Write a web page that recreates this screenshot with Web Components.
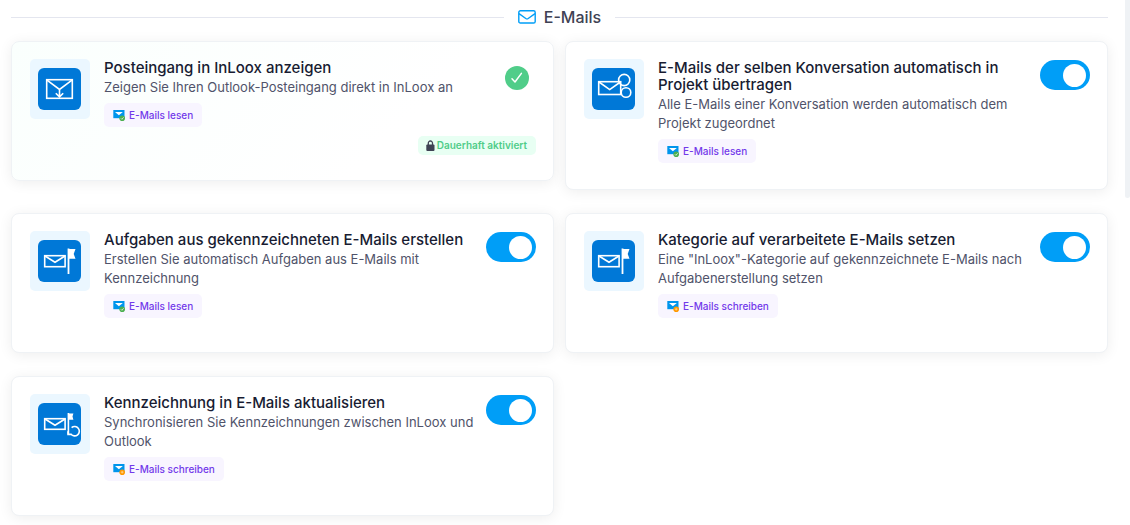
<!DOCTYPE html>
<html lang="de">
<head>
<meta charset="utf-8">
<title>E-Mails</title>
<style>
body { margin: 0; background: #fff; font-family: Inter, "Open Sans", sans-serif; color: #181c32; }
</style>
</head>
<body>
<settings-page>
  <section-heading>E-Mails</section-heading>
  <card-grid>
    <feature-card icon="inbox" scope="read" locked>
      <span slot="title">Posteingang in InLoox anzeigen</span>
      <span slot="text">Zeigen Sie Ihren Outlook-Posteingang direkt in InLoox an</span>
    </feature-card>
    <feature-card icon="conversation" scope="read">
      <span slot="title">E-Mails der selben Konversation automatisch in Projekt übertragen</span>
      <span slot="text">Alle E-Mails einer Konversation werden automatisch dem Projekt zugeordnet</span>
    </feature-card>
    <feature-card icon="flag" scope="read">
      <span slot="title">Aufgaben aus gekennzeichneten E-Mails erstellen</span>
      <span slot="text">Erstellen Sie automatisch Aufgaben aus E-Mails mit Kennzeichnung</span>
    </feature-card>
    <feature-card icon="flag" scope="write">
      <span slot="title">Kategorie auf verarbeitete E-Mails setzen</span>
      <span slot="text">Eine "InLoox"-Kategorie auf gekennzeichnete E-Mails nach Aufgabenerstellung setzen</span>
    </feature-card>
    <feature-card icon="sync" scope="write">
      <span slot="title">Kennzeichnung in E-Mails aktualisieren</span>
      <span slot="text">Synchronisieren Sie Kennzeichnungen zwischen InLoox und Outlook</span>
    </feature-card>
  </card-grid>
</settings-page>

<script>
class BaseElement extends HTMLElement {
  constructor() {
    super();
    this.attachShadow({ mode: 'open' });
  }
  connectedCallback() {
    this.shadowRoot.innerHTML = this.render();
  }
}

customElements.define('settings-page', class extends BaseElement {
  render() {
    return `
<style>
:host { display: flex; align-items: flex-start; }
main { flex: 1; min-width: 0; padding: 5px 17px 9px 11px; }
.thumb { width: 5px; height: 198px; background: #eff2f5; border-radius: 0 0 4px 4px; }
</style>
<main><slot></slot></main>
<div class="thumb"></div>`;
  }
});

customElements.define('section-heading', class extends BaseElement {
  render() {
    return `
<style>
:host { display: flex; align-items: center; gap: 14px; margin-bottom: 12px; }
:host::before, :host::after { content: ""; flex: 1; height: 1px; background: #e4e6ef; }
h2 { margin: 0; display: flex; align-items: center; gap: 8px; font-size: 16px; line-height: 24px; font-weight: 500; color: #3f4254; }
svg { display: block; }
</style>
<h2><svg width="18" height="14" viewBox="0 0 18 14" fill="none" stroke="#009ef7" stroke-width="1.4" stroke-linejoin="round" aria-hidden="true"><rect x=".8" y=".8" width="16.4" height="12.2" rx="1.6"/><path d="M1 3.6 7.8 8.5q1.2.8 2.4 0L17 3.6"/></svg><slot></slot></h2>`;
  }
});

customElements.define('card-grid', class extends BaseElement {
  render() {
    return `
<style>
:host { display: grid; grid-template-columns: repeat(2, minmax(0, 1fr)); gap: 23px 11px; align-items: start; }
</style>
<slot></slot>`;
  }
});

const TILE_ART = {
  inbox: '<rect x="8.7" y="11.7" width="25.6" height="18.6"/><path d="M9 12.2 21.5 21.5 34 12.2M21.5 21v8M17.8 25.2l3.7 3.7 3.7-3.7"/>',
  conversation: '<rect x="6.7" y="13.7" width="22" height="12.8"/><path d="M7 14l10.7 7.6L28.4 14"/><circle cx="32.2" cy="12" r="5.6"/><circle cx="34" cy="24.5" r="4.8"/>',
  flag: '<rect x="6.7" y="15.7" width="20.4" height="11"/><path d="M7 16l10 6.2L27 16"/><path d="M30.5 8.5V34" stroke-width="1.8"/><path d="M30.5 9h7l-1.8 5 1.8 4.8h-7z" fill="#fff" stroke="none"/>',
  sync: '<rect x="6.7" y="15.7" width="20.4" height="10.6"/><path d="M7 16l10 6.2L27 16M30.4 10v21"/><path d="M30.4 10.4h5l-.9 3.1.9 3.3h-5z" fill="#fff" stroke="none"/><path d="M33.6 24.6a4.7 4.7 0 1 1-.6 6.6M30 28.2v3.2h3.6"/>'
};

customElements.define('feature-tile', class extends BaseElement {
  render() {
    return `
<style>
:host { display: flex; align-items: center; box-sizing: border-box; padding-left: 8px; flex: none; width: 60px; height: 60px; border-radius: 5px; background: #ebf7ff; }
svg { display: block; }
</style>
<svg width="43" height="42" viewBox="0 0 43 42" fill="none" stroke="#fff" stroke-width="1.6" aria-hidden="true"><rect width="43" height="42" rx="6" fill="#0078d7" stroke="none"/>${TILE_ART[this.getAttribute('icon')]}</svg>`;
  }
});

customElements.define('scope-pill', class extends BaseElement {
  render() {
    const write = this.getAttribute('scope') === 'write';
    const mark = write
      ? '<circle cx="9.2" cy="9.2" r="2.8" fill="#ff9800"/><path d="M9.2 7.8v2.8M7.8 9.2h2.8" stroke="#ffe0a6" stroke-width=".7"/>'
      : '<circle cx="9.2" cy="9.2" r="2.8" fill="#4caf50"/><path d="m7.9 9.3 1 1 1.7-2" stroke="#fff" stroke-width=".7" fill="none"/>';
    return `
<style>
:host { display: inline-flex; align-items: center; gap: 4px; padding: 0 9px; border-radius: 5px; background: #f8f5ff; color: #7239ea; font-size: 10px; line-height: 24px; font-weight: 500; white-space: nowrap; }
svg { display: block; flex: none; }
</style>
<svg width="12" height="12" viewBox="0 0 12 12" aria-hidden="true"><path d="M.3 1h11.2v8.2H.3z" fill="#0095ec"/><path d="M2 3h7.8L5.9 6.2z" fill="#fff"/>${mark}</svg><span>${write ? 'E-Mails schreiben' : 'E-Mails lesen'}</span>`;
  }
});

customElements.define('toggle-switch', class extends BaseElement {
  render() {
    return `
<style>
:host { display: block; height: 30px; }
input { appearance: none; display: flex; align-items: center; box-sizing: border-box; width: 50px; height: 30px; margin: 0; padding: 0 4px; border-radius: 15px; background: #cdd3dc; cursor: pointer; }
input::before { content: ""; width: 23px; height: 23px; border-radius: 50%; background: #fff; }
input:checked { background: #009ef7; justify-content: flex-end; }
</style>
<input type="checkbox" role="switch" aria-label="${this.getAttribute('label')}" checked>`;
  }
});

customElements.define('lock-badge', class extends BaseElement {
  render() {
    return `
<style>
:host { display: flex; align-items: center; gap: 2px; padding: 0 9px 0 8px; border-radius: 5px; background: #e8fff3; color: #50cd89; font-size: 10px; line-height: 19px; font-weight: 600; }
svg { display: block; }
</style>
<svg width="9" height="12" viewBox="0 0 9 12" aria-hidden="true"><rect x=".3" y="4.4" width="8.2" height="6.6" rx="1" fill="#3f4254"/><path d="M2.3 5V3.1a2.1 2.1 0 0 1 4.2 0V5" fill="none" stroke="#3f4254" stroke-width="1.3"/></svg><span>Dauerhaft aktiviert</span>`;
  }
});

customElements.define('feature-card', class extends BaseElement {
  render() {
    const locked = this.hasAttribute('locked');
    const label = this.querySelector('[slot=title]').textContent;
    return `
<style>
:host { display: block; box-sizing: border-box; min-height: 140px; padding: 17px 17px 26px 18px; border: 1px solid #eff2f5; border-radius: 8px; background: #fff; box-shadow: 0 2px 14px rgba(0, 0, 0, .07); }
:host([locked]) { background: linear-gradient(135deg, #fafffd 0%, #fff 70%); padding-bottom: 25px; }
.row { display: flex; align-items: flex-start; }
.body { flex: 1; min-width: 0; padding: 0 8px 0 14px; }
h3 { margin: 0 0 2px; font-size: 15px; line-height: 17px; font-weight: 500; color: #181c32; }
p { margin: 0 0 6px; font-size: 13px; line-height: 19px; color: #50536a; }
scope-pill { display: inline-flex; vertical-align: top; }
.state { flex: none; width: 50px; padding-top: 1px; }
.check { display: block; margin: 6px 7px 0 auto; }
footer { display: flex; justify-content: flex-end; margin-top: 9px; }
</style>
<div class="row">
  <feature-tile icon="${this.getAttribute('icon')}"></feature-tile>
  <div class="body">
    <h3><slot name="title"></slot></h3>
    <p><slot name="text"></slot></p>
    <scope-pill scope="${this.getAttribute('scope')}"></scope-pill>
  </div>
  <div class="state">${locked
    ? '<svg class="check" width="24" height="24" viewBox="0 0 24 24" role="img" aria-label="Aktiviert"><circle cx="12" cy="12" r="12" fill="#50cd89"/><path d="m7 12.8 3 3.2 6.4-8.6" fill="none" stroke="#fff" stroke-width="1.5" stroke-linecap="round" stroke-linejoin="round"/></svg>'
    : `<toggle-switch label="${label}"></toggle-switch>`}</div>
</div>
${locked ? '<footer><lock-badge></lock-badge></footer>' : ''}`;
  }
});
</script>
</body>
</html>
